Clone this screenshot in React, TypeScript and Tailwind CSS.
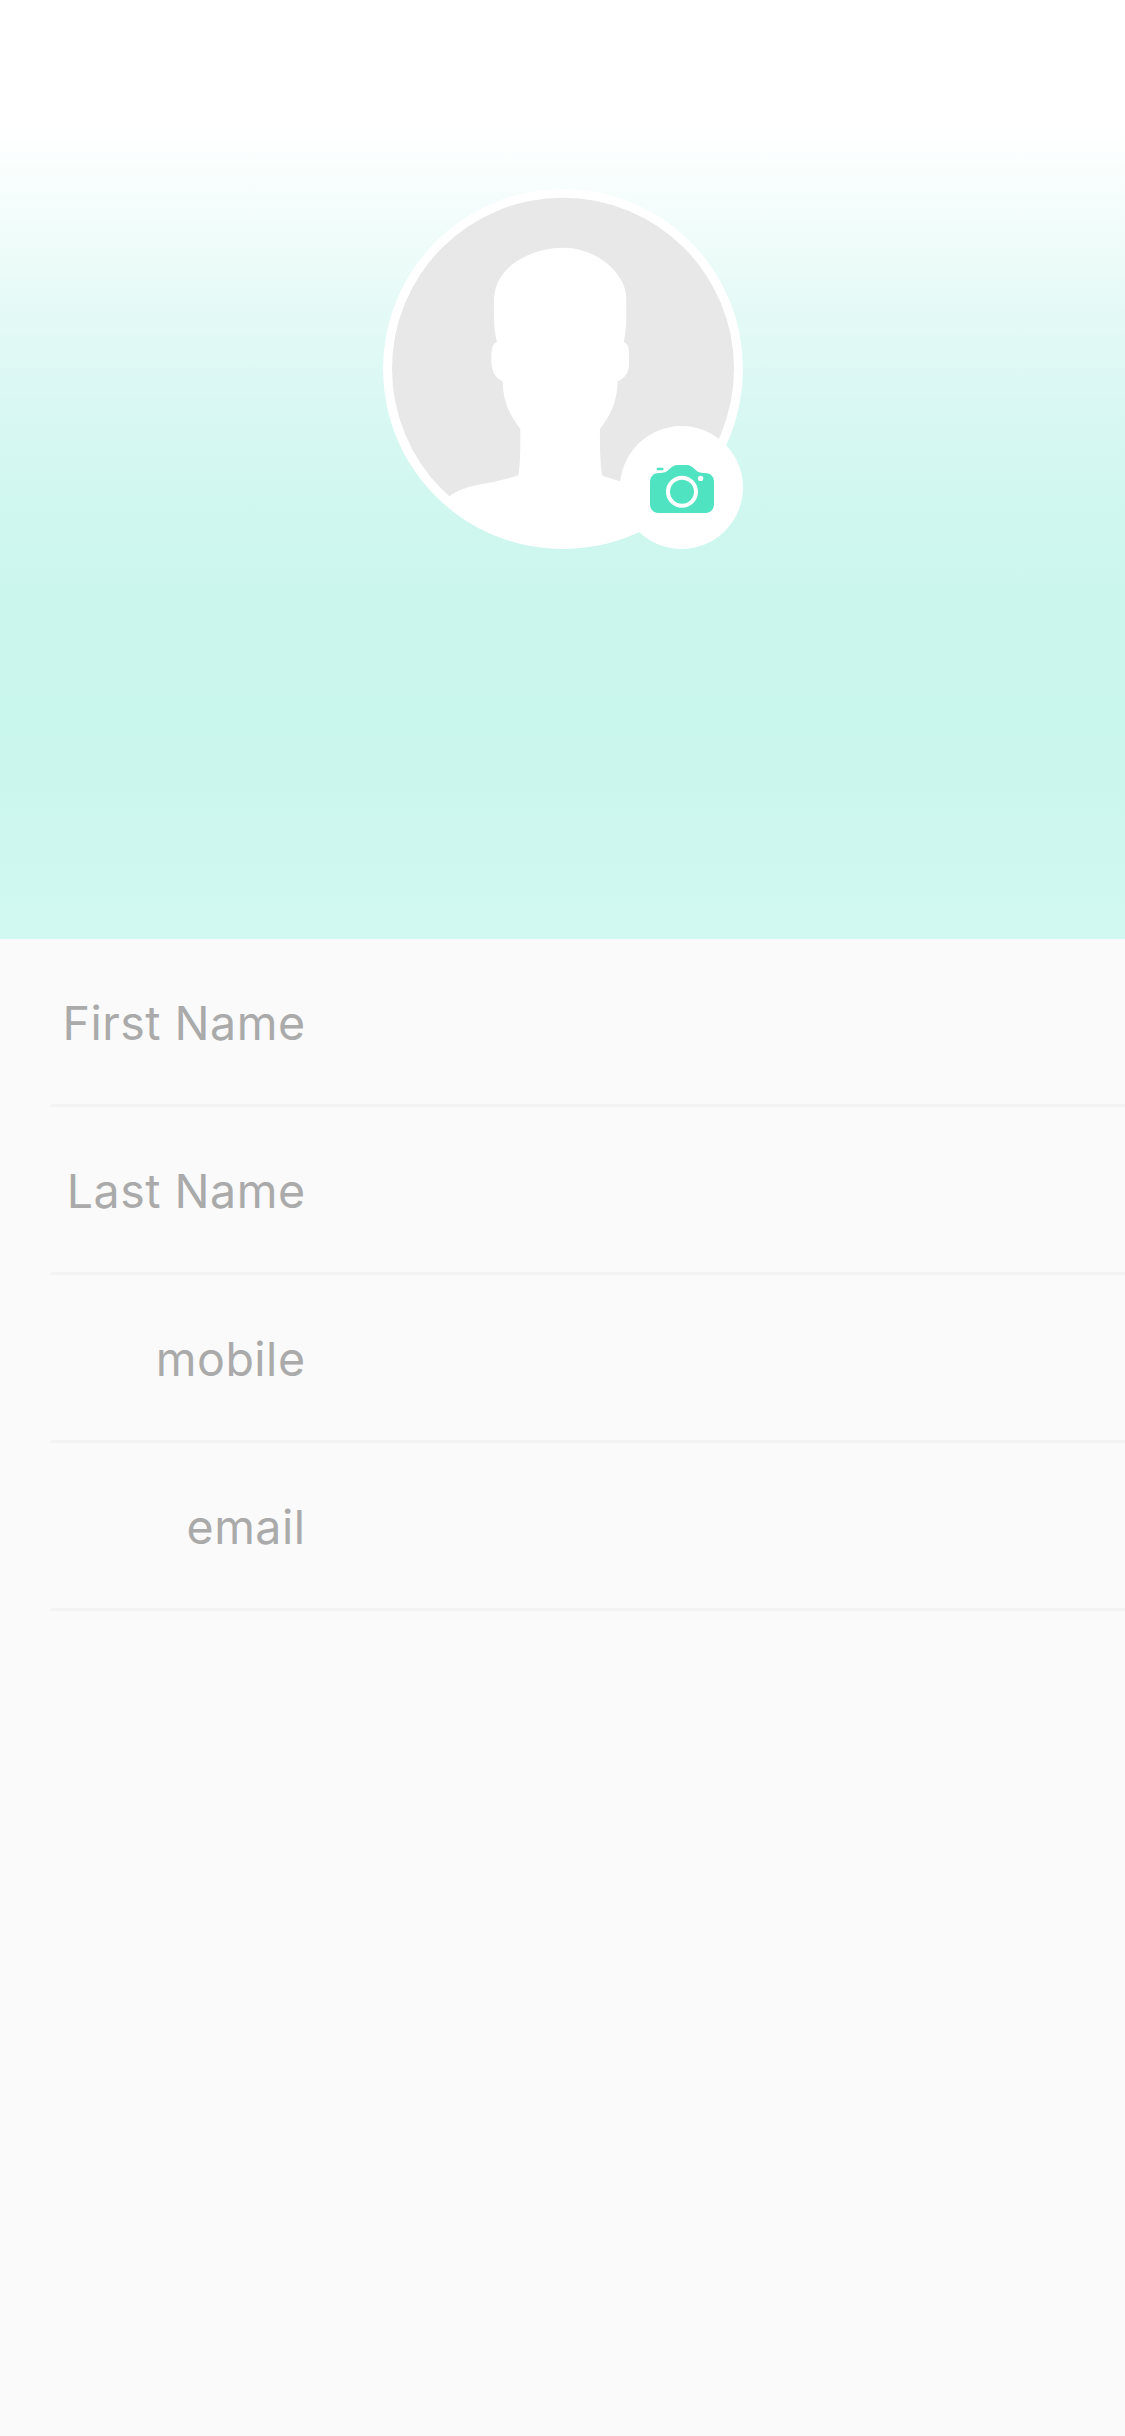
import React from "react";

const fields = ["First Name", "Last Name", "mobile", "email"];

function Avatar() {
  return (
    <svg viewBox="39 28 1080 1080" className="block size-[360px]" aria-label="Profile photo">
      <defs>
        <clipPath id="portrait">
          <circle cx="579" cy="568" r="539" />
        </clipPath>
      </defs>
      <circle cx="579" cy="568" r="540" fill="#fff" />
      <circle cx="579" cy="567" r="513" fill="#e8e8e8" />
      <path
        clipPath="url(#portrait)"
        fill="#fff"
        d="M579 204C660 204 730 252 757 308C767 329 769 345 769 368V405C769 435 767 461 761 487C774 492 776 503 777 518V556C775 582 767 591 743 606C741 666 724 703 690 747C689 790 690 845 696 887C720 897 735 901 760 907L1000 980V1120H100V1010L239 950C286 911 372 914 445 887C452 845 451 790 451 747C417 703 400 666 398 606C378 593 367 582 364 550V525C366 503 368 492 381 487C374 461 372 435 372 405V368C372 345 374 329 386 303C415 246 495 204 579 204Z"
      />
    </svg>
  );
}

function CameraIcon() {
  return (
    <svg viewBox="0 0 64 48" className="block h-12 w-16" aria-hidden="true">
      <path
        fill="#50e3c2"
        d="M9 8C14 8 16.500 7 19 4.500C22 1.500 24 0 28 0H37C40 0 42 1.500 45 4.500C47.500 7 50 8 55 8C61 8 64 12 64 17V39C64 44.500 60.500 48 55 48H9C3.500 48 0 44.500 0 39V17C0 12 3 8 9 8Z"
      />
      <rect x="6.700" y="2.800" width="6.800" height="2.400" rx="1" fill="#50e3c2" />
      <circle cx="32" cy="26.700" r="14" fill="none" stroke="#fff" strokeWidth="4" />
      <circle cx="50.600" cy="13.400" r="2.700" fill="#fff" />
    </svg>
  );
}

export default function App() {
  return (
    <div className="min-h-[2436px] w-full bg-[#fafafa] font-['Inter',sans-serif]">
      <header className="flex h-[939px] justify-center bg-[linear-gradient(to_bottom,#fff_0px,#fff_125px,#f3fdfb_215px,#e6faf7_300px,#daf8f3_400px,#d0f7f0_500px,#cbf6ee_600px,#c9f6ed_723px,#cdf7ef_830px,#d1f9f1_939px)] pt-[189px] pl-px">
        <div className="relative size-[360px]">
          <Avatar />
          <button className="absolute right-0 bottom-0 flex size-[123px] items-center justify-center rounded-full bg-white pt-[3px] pl-px" aria-label="Change photo">
            <CameraIcon />
          </button>
        </div>
      </header>
      <main>
        {fields.map((label) => (
          <div key={label} className="ml-[51px] flex h-[168px] items-center border-b-3 border-[#f3f3f3]">
            <label className="w-[254.500px] pt-[3px] text-right text-[46.500px] leading-none tracking-[0.5px] whitespace-nowrap text-[#aaa]">
              {label}
            </label>
          </div>
        ))}
      </main>
    </div>
  );
}
